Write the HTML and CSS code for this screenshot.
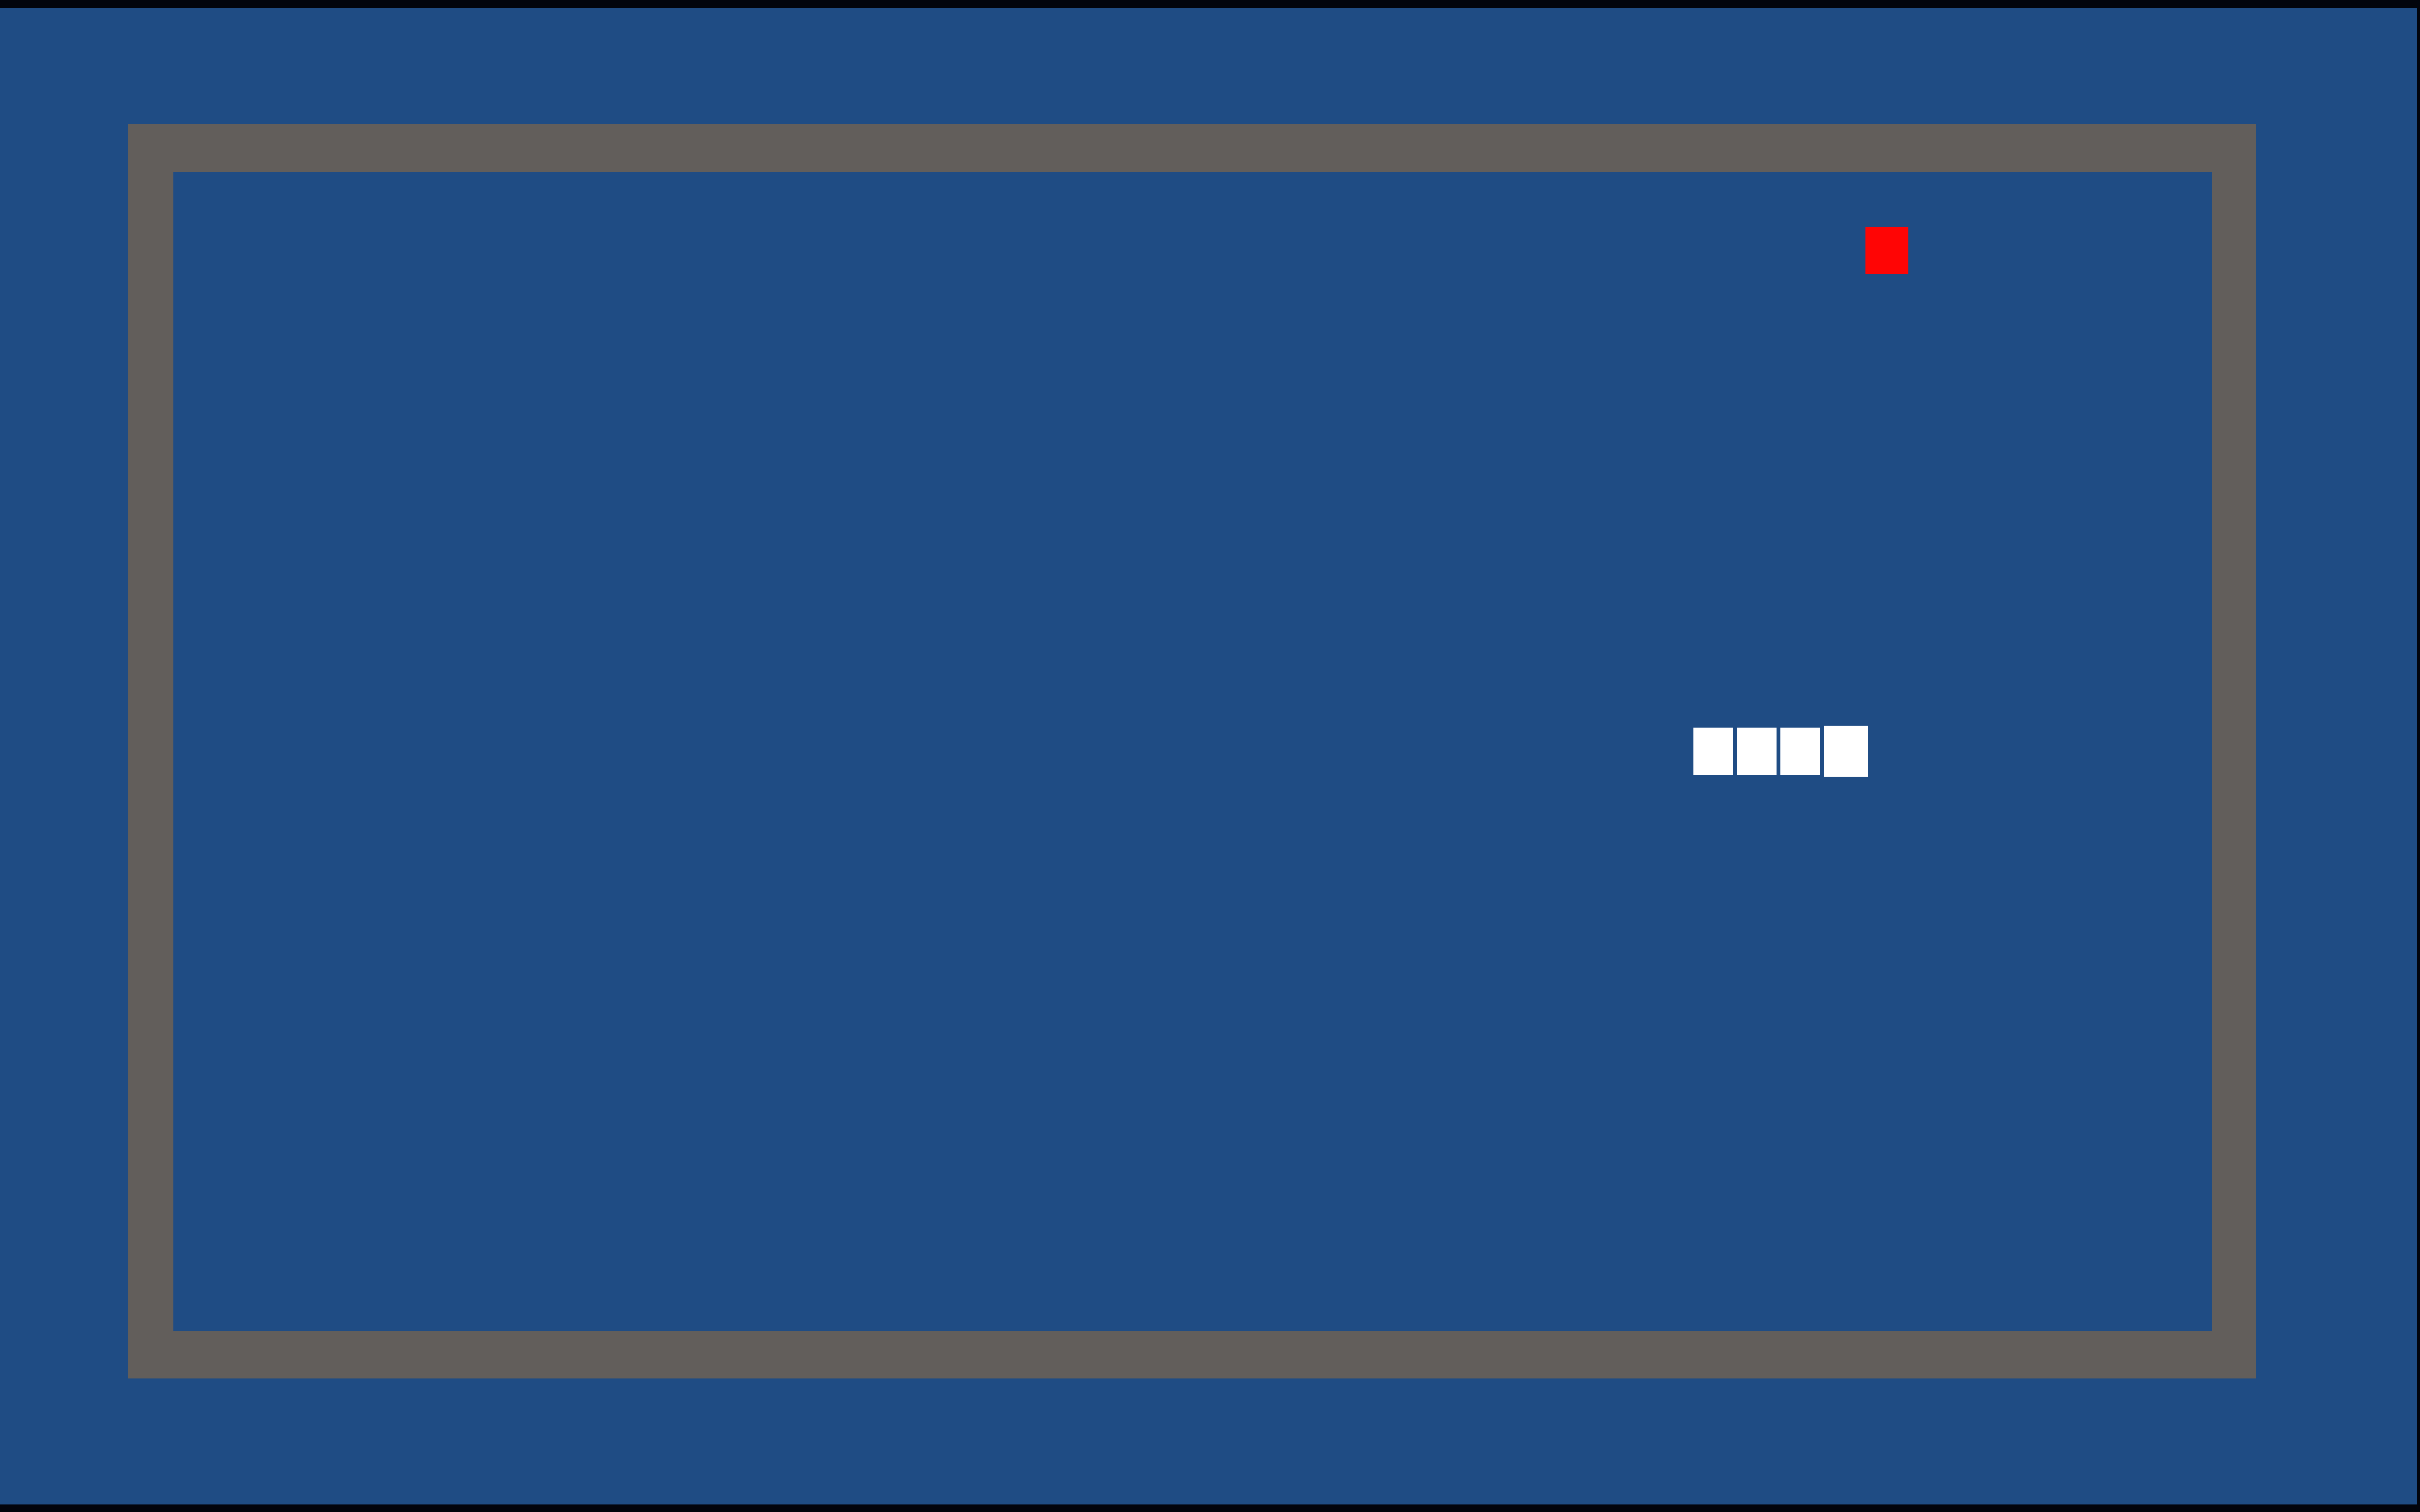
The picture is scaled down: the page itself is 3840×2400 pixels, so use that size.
FILE: index.html
```html
<!DOCTYPE html>
<html lang="en">
<head>
<meta charset="utf-8">
<title>Snake</title>
<link rel="stylesheet" href="styles.css">
</head>
<body>
<div class="screen">
  <div class="stage">
    <div class="frame">
      <div class="board">
        <div class="food"></div>
        <div class="snake">
          <div class="seg"></div>
          <div class="seg"></div>
          <div class="seg"></div>
          <div class="seg head"></div>
        </div>
      </div>
    </div>
  </div>
</div>
</body>
</html>
```

FILE: styles.css
```css
html, body {
  margin: 0;
  padding: 0;
  background: #02040c;
  width: 3840px;
  height: 2400px;
  overflow: hidden;
}

.screen {
  width: 3840px;
  height: 2400px;
  padding: 13px 5px 12px 0;
  box-sizing: border-box;
  display: flex;
}

.stage {
  flex: 1;
  background: #1f4c84;
  padding: 184px 255px 200px 203px;
  display: flex;
}

.frame {
  flex: 1;
  display: flex;
  border-style: solid;
  border-color: #625e5b;
  border-width: 76px 70px 75px 72px;
}

.board {
  flex: 1;
  position: relative;
  background: #1f4c84;
}

.food {
  position: absolute;
  left: 2685px;
  top: 87px;
  width: 68px;
  height: 75px;
  background: #ff0505;
}

.snake {
  position: absolute;
  left: 2412px;
  top: 879px;
  display: flex;
  align-items: center;
  gap: 6px;
}

.seg {
  width: 63px;
  height: 75px;
  background: #ffffff;
}

.seg.head {
  width: 70px;
  height: 81px;
}
```
